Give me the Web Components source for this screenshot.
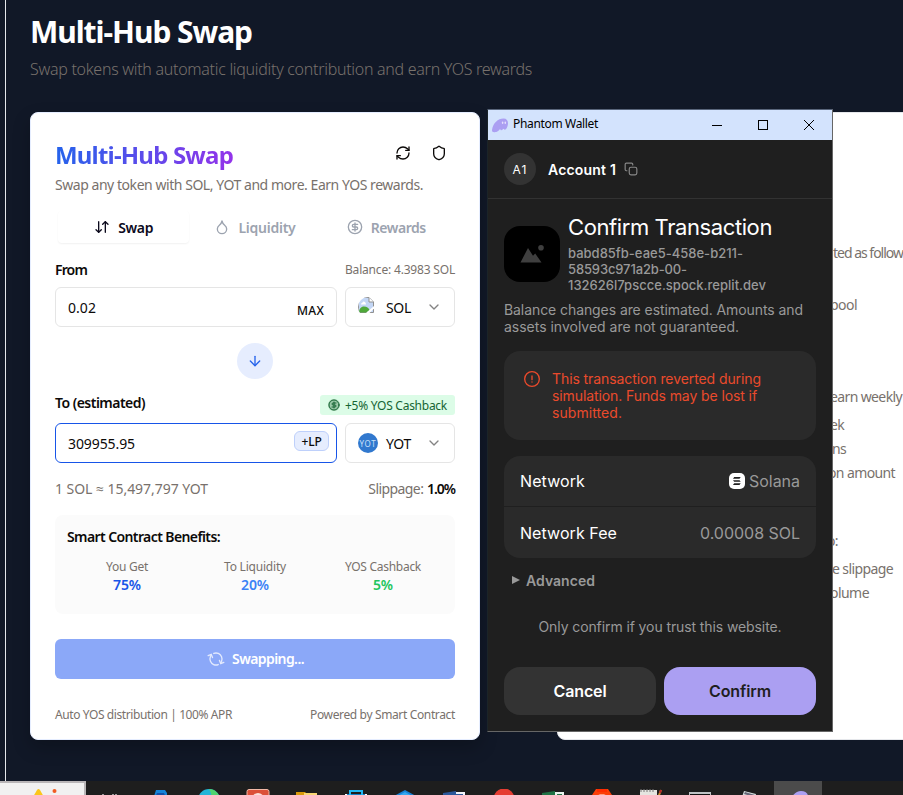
<!DOCTYPE html>
<html lang="en">
<head>
<meta charset="utf-8">
<title>Multi-Hub Swap</title>
<style>
html,body{margin:0;height:100%;overflow:hidden;background:#111827}
body{font-family:"Noto Sans","Open Sans",sans-serif}
</style>
</head>
<body>
<swap-desktop></swap-desktop>
<script>
function define(name, html, setup) {
  customElements.define(name, class extends HTMLElement {
    constructor() {
      super();
      this.attachShadow({ mode: 'open' });
    }
    connectedCallback() {
      if (this.shadowRoot.childNodes.length) return;
      const t = document.createElement('template');
      t.innerHTML = html;
      this.shadowRoot.append(t.content.cloneNode(true));
      if (setup) setup(this);
    }
  });
}

const stroke = (body) => `<svg viewBox="0 0 24 24" fill="none" stroke="currentColor" stroke-width="2" stroke-linecap="round" stroke-linejoin="round">${body}</svg>`;
const ICONS = {
  refresh: stroke('<path d="M3 12a9 9 0 0 1 9-9 9.75 9.75 0 0 1 6.74 2.74L21 8"/><path d="M21 3v5h-5"/><path d="M21 12a9 9 0 0 1-9 9 9.75 9.75 0 0 1-6.74-2.74L3 16"/><path d="M8 16H3v5"/>'),
  shield: stroke('<path d="M20 13c0 5-3.5 7.5-7.66 8.95a1 1 0 0 1-.67-.01C7.5 20.5 4 18 4 13V6a1 1 0 0 1 1-1c2 0 4.5-1.2 6.24-2.72a1.17 1.17 0 0 1 1.52 0C14.51 3.81 17 5 19 5a1 1 0 0 1 1 1z"/>'),
  swap: stroke('<path d="m3 16 4 4 4-4"/><path d="M7 20V4"/><path d="m21 8-4-4-4 4"/><path d="M17 4v16"/>'),
  droplet: stroke('<path d="M12 22a7 7 0 0 0 7-7c0-2-1-3.9-3-5.5s-3.5-4-4-6.500c-.5 2.500-2 4.900-4 6.500C6 11.100 5 13 5 15a7 7 0 0 0 7 7z"/>'),
  dollar: stroke('<circle cx="12" cy="12" r="10"/><path d="M16 8h-6a2 2 0 1 0 0 4h4a2 2 0 1 1 0 4H8"/><path d="M12 18V6"/>'),
  down: stroke('<path d="M12 5v14"/><path d="m19 12-7 7-7-7"/>'),
  chevron: stroke('<path d="m6 9 6 6 6-6"/>'),
  copy: stroke('<rect x="9" y="9" width="13" height="13" rx="3"/><path d="M5 15H4a2 2 0 0 1-2-2V4a2 2 0 0 1 2-2h9a2 2 0 0 1 2 2v1"/>'),
  alert: stroke('<circle cx="12" cy="12" r="11"/><path d="M12 7.500v5.500"/><path d="M12 16.500v.1"/>'),
  minus: '<svg viewBox="0 0 10 10"><path d="M0 5.500h10" stroke="#000"/></svg>',
  square: '<svg viewBox="0 0 10 10"><rect x=".5" y=".5" width="9" height="9" fill="none" stroke="#000"/></svg>',
  close: '<svg viewBox="0 0 10 10"><path d="M0 0 10 10M10 0 0 10" stroke="#000"/></svg>',
  ghost: '<svg viewBox="0 0 16 15"><path fill="#ab9ff2" d="M0 12C1 5 6 .5 11.500.5c3 0 4.700 2 4.500 5-.2 3-1.600 6.200-3.200 6.200-.8 0-.8-1-1.200-1-.5 0-1.300 1.600-2.300 1.600-.8 0-.6-1.100-1.200-1.100-.8 0-2 2.800-4.600 2.800C1.500 14.500-.2 14 0 12z"/><ellipse cx="10.600" cy="4.800" rx=".8" ry="1.200" fill="#e4defd"/><ellipse cx="13.300" cy="4.800" rx=".8" ry="1.200" fill="#e4defd"/></svg>',
  picture: '<svg viewBox="0 0 24 20"><path fill="#3f3f3f" d="M.5 18.500 8 4l5 7.800 2.200-2.300 6.300 9z"/><circle cx="21" cy="3.800" r="2.800" fill="#3f3f3f"/></svg>',
  solana: '<svg viewBox="0 0 16 16"><rect width="16" height="16" rx="5" fill="#fff"/><path fill="#222" d="M5.200 4h6.500l-1.200 1.700H4zM4 7.200h6.500l1.200 1.600H5.200zM5.200 10.300h6.500L10.500 12H4z"/></svg>',
  broken: '<svg viewBox="0 0 16 16"><path d="M.5.500h10.500l4.500 4.500v10.500H.5z" fill="#c3d6f5" stroke="#909090"/><path d="M11 .5v4.500h4.500" fill="#fff" stroke="#909090"/><path d="M1 15.500c0-3.500 2-6 5-6s4.500 1.500 5.500 3.500L8.500 15.500z" fill="#4fa83a"/><path d="M3 7.500c0-1.500 1.500-1.500 2-2.500s3 0 3 2.500z" fill="#fff"/><path d="m8 16 8-7v2.500l-4.500 4.500z" fill="#fff"/></svg>'
};

define('ui-icon', `<style>:host{display:block;flex:none;width:16px;height:16px}svg{display:block;width:100%;height:100%;overflow:visible}</style>`,
  el => el.shadowRoot.append(document.createRange().createContextualFragment(ICONS[el.getAttribute('name')])));

/* Taskbar: each button shows the upper part of its application icon. */
const APPS = [
  '<path d="M4 7v7M8 9h2M14 5v9M17 5v9M4 5v1" stroke="#eee" stroke-width="1.200"/>',
  '<path d="M4 14 8 1h9l2 3v10z" fill="#1683d8"/><path d="M5 14 9 4h7l2 5-5 1-2 4z" fill="#1450a8"/>',
  '<circle cx="12" cy="11" r="11" fill="#22b5d7"/><path d="M12 0a11 11 0 0 1 11 11v5h-9c0-7 2-9-2-16z" fill="#50d46f"/>',
  '<rect x="1" y=".5" width="22" height="20" rx="2" fill="#dc5039" stroke="#f3b9a6"/><circle cx="12" cy="10" r="6" fill="#fbe1db"/><circle cx="12" cy="10" r="3" fill="#d04a35"/>',
  '<path d="M1 3h9l2 2h10v9H1z" fill="#d99a0b"/><path d="M9 4h13v10H9z" fill="#f8d775"/>',
  '<path d="M1 5h22v9H1z" fill="#fff"/><path d="M3 5h18v9H3z" fill="#157fc9"/><path d="M6 7V2h12v5" fill="none" stroke="#22b8f3" stroke-width="2"/>',
  '<path d="m12 1 11 6v7H1V7z" fill="#1683d8"/><path d="m3 8 9-5 9 5-9 4z" fill="#37a9ef"/>',
  '<path d="m1 4 13-2v12H1z" fill="#2b579a"/><path d="M14 3h9v11h-9z" fill="#f2f5fb"/><path d="M14 5h7v2h-7z" fill="#2b579a"/>',
  '<circle cx="12" cy="10" r="10.500" fill="#e53d32"/>',
  '<path d="m1 4 13-2v12H1z" fill="#207245"/><path d="M14 3h9v11h-9z" fill="#e8f4ed"/><path d="M16 5h5v3h-5z" fill="#207245"/>',
  '<path d="M2 6 6 0h12l4 6v8H2z" fill="#fb3f08"/><path d="M6 7c3-2 9-2 12 0v8H6z" fill="#fff"/><path d="M7 0h10v3H7z" fill="#ff2c00"/>',
  '<path d="M1 1h17v13H1z" fill="#e5e5e0"/><path d="M2 0v3M5 0v3M8 0v3M11 0v3M14 0v3" stroke="#777"/><path d="m22 1-5 13" stroke="#c89136" stroke-width="2"/><path d="m22 1-1 3" stroke="#b92929" stroke-width="2"/>',
  '<path d="M1 3h22v11H1z" fill="#bfc3c5"/><path d="M2 5h20v8H2z" fill="#111"/>',
  '<path d="m7 2 12 3-2 9H3z" fill="#d7e0df"/><path d="m8 3 10 3-1 2L7 5z" fill="#667"/><path d="m4 8 9 2-1 4H3z" fill="#4c9e84"/>',
  '<path d="M3 14C5 7 10 2 15 2s8 3 7 8l-1 4z" fill="#ab9ff2"/>'
];
define('task-bar', `<style>
:host{display:flex;height:14px;background:#1e1e1e;overflow:hidden}
.widget{box-sizing:border-box;width:86px;height:14px;background:#f1f1f1;border:solid #b9b6b8;border-width:2px 2px 0 0;padding-left:32px;flex:none}
.app{flex:none;width:49.140px;height:14px;display:flex;justify-content:center;padding-top:8px;box-sizing:border-box}
.app:last-child{background:#4b4b4b;width:48px}
svg{display:block;flex:none}
</style><div class="widget"><svg width="32" height="12" viewBox="0 0 32 12"><path d="M1 14 5 7q1.500-2 3 0l4 7z" fill="#fbc61b"/><circle cx="22.500" cy="8" r="2" fill="#f15b22"/></svg></div>`,
  el => {
    for (const body of APPS) {
      const d = document.createElement('div');
      d.className = 'app';
      d.innerHTML = `<svg width="24" height="14" viewBox="0 0 24 14">${body}</svg>`;
      el.shadowRoot.append(d);
    }
  });

define('tab-item', `<style>
:host{display:flex;box-sizing:border-box;height:32px;align-items:center;justify-content:center;gap:8px;color:#9ca3af;font-size:14px;font-weight:600;border-radius:4px}
:host([active]){color:#0c0a1d;background:#fff;box-shadow:0 1px 2px rgba(0,0,0,.06)}
</style><slot></slot>`);

define('token-select', `<style>
:host{display:flex;box-sizing:border-box;width:110px;height:40px;align-items:center;border:1px solid #e5e5e5;border-radius:6px;padding:0 12px;font-size:14px;color:#0c0a09}
.logo{width:20px;height:20px;border-radius:50%;display:flex;align-items:center;justify-content:center;overflow:hidden;margin-right:8px;flex:none}
.name{flex:1}
ui-icon{opacity:.5}
</style><div class="logo"><slot name="logo"></slot></div><div class="name"><slot></slot></div><ui-icon name="chevron"></ui-icon>`);

define('amount-field', `<style>
:host{display:flex;box-sizing:border-box;width:282px;height:40px;align-items:center;justify-content:space-between;border:1px solid #e5e5e5;border-radius:6px;padding:0 8px 0 12px;font-size:14px;color:#0c0a09}
:host([focused]){border-color:#1755e8}
</style><slot></slot><slot name="action"></slot>`);

define('benefit-cell', `<style>
:host{display:flex;flex-direction:column;align-items:center;font-size:12px;line-height:18px;color:#78716c}
::slotted([slot=value]){font-size:14px;font-weight:600;line-height:18px}
</style><slot></slot><slot name="value"></slot>`);

define('swap-card', `<style>
:host{display:flex;flex-direction:column;flex:none;box-sizing:border-box;width:450px;height:628px;padding:24px;background:#fff;border:1px solid #e5edff;border-radius:8px;color:#0c0a09;font-size:14px;box-shadow:0 8px 18px rgba(0,0,0,.22)}
.row{display:flex;align-items:center;justify-content:space-between;flex:none}
.head{height:36px}
.title{font-size:24px;font-weight:700;line-height:36px;padding-bottom:1px;color:transparent;background:linear-gradient(90deg,#2563eb,#9333ea);-webkit-background-clip:text;background-clip:text}
.tools{display:flex;gap:20px;padding-right:8px;padding-bottom:4px}
.sub{height:20px;line-height:20px;color:#78716c;margin-top:2px}
.tabs{display:grid;grid-template-columns:repeat(3,1fr);padding:0 3px;margin-top:16px}
.from{height:20px;margin-top:16px}
.from>*{padding-top:1px}
.small{font-size:12px;color:#78716c}
b{font-weight:600}
.fields{margin-top:8px}
.max{font-weight:500;padding:6px 4px 0 0}
.circle{width:36px;height:36px;border-radius:50%;background:#e6edfe;color:#2563eb;display:flex;align-items:center;justify-content:center;margin:16px auto 0;flex:none}
.to{height:20px;margin-top:16px}
.to b{padding-bottom:6px}
.badge{display:flex;align-items:center;gap:5px;height:20px;width:135px;box-sizing:border-box;padding-left:8px;background:#dcfce7;color:#166534;font-size:12px;border-radius:3px}
.badge ui-icon{width:12px;height:12px;border-radius:50%;background:#9ccaa9}
.lp{box-sizing:border-box;display:flex;align-items:center;justify-content:center;width:35px;height:20px;border:1px solid #bed0fb;background:#e6edfe;border-radius:6px;font-size:12px;font-weight:500;margin:0 -1px 4px 0}
.yot{display:flex;align-items:center;justify-content:center;width:20px;height:20px;background:#3178ce;color:#c9e0fa;font-size:8px}
.rate{height:20px;margin-top:15px;color:#78716c}
.rate b{color:#0c0a09}
.box{box-sizing:border-box;height:99px;margin-top:17px;padding:12px;background:#fbfbfb;border-radius:8px;flex:none}
.box h4{margin:0;font-size:14px;font-weight:600;line-height:20px}
.grid{display:grid;grid-template-columns:1fr 1fr 1fr;gap:8px;margin-top:11px}
.button{display:flex;align-items:center;justify-content:center;gap:8px;height:40px;margin-top:25px;border-radius:6px;background:#8ba8f8;color:#fff;font-weight:600;flex:none;padding:0 0 1px 2px;box-sizing:border-box}
.button ui-icon{transform:rotate(68deg);opacity:.75}
.foot{height:20px;margin-top:25px}
</style>
<div class="row head"><div class="title"><fit-text w="178">Multi-Hub Swap</fit-text></div><div class="tools"><ui-icon name="refresh"></ui-icon><ui-icon name="shield"></ui-icon></div></div>
<div class="sub"><fit-text w="368">Swap any token with SOL, YOT and more. Earn YOS rewards.</fit-text></div>
<div class="tabs">
<tab-item active><ui-icon name="swap"></ui-icon><fit-text w="35">Swap</fit-text></tab-item>
<tab-item><ui-icon name="droplet"></ui-icon><fit-text w="57">Liquidity</fit-text></tab-item>
<tab-item><ui-icon name="dollar"></ui-icon><fit-text w="55">Rewards</fit-text></tab-item></div>
<div class="row from"><b><fit-text w="32">From</fit-text></b><span class="small"><fit-text w="110">Balance: 4.3983 SOL</fit-text></span></div>
<div class="row fields"><amount-field><fit-text w="28">0.02</fit-text><fit-text slot="action" class="max" w="31" style="font-size:12px">MAX</fit-text></amount-field>
<token-select><ui-icon slot="logo" name="broken" style="margin:-4px 0 0 -4px"></ui-icon><fit-text w="25">SOL</fit-text></token-select></div>
<div class="circle"><ui-icon name="down"></ui-icon></div>
<div class="row to"><b><fit-text w="90">To (estimated)</fit-text></b><div class="badge"><ui-icon name="dollar"></ui-icon><fit-text w="102">+5% YOS Cashback</fit-text></div></div>
<div class="row fields"><amount-field focused><fit-text w="67">309955.95</fit-text><span slot="action" class="lp"><fit-text w="20">+LP</fit-text></span></amount-field>
<token-select><span slot="logo" class="yot"><fit-text w="17">YOT</fit-text></span><fit-text w="25">YOT</fit-text></token-select></div>
<div class="row rate"><fit-text w="153">1 SOL ≈ 15,497,797 YOT</fit-text><span><fit-text w="55">Slippage:</fit-text>&nbsp;<b><fit-text w="28">1.0%</fit-text></b></span></div>
<div class="box"><h4><fit-text w="153">Smart Contract Benefits:</fit-text></h4><div class="grid">
<benefit-cell><fit-text w="42">You Get</fit-text><fit-text slot="value" w="28" style="color:#1755e8">75%</fit-text></benefit-cell>
<benefit-cell><fit-text w="62">To Liquidity</fit-text><fit-text slot="value" w="28" style="color:#3b82f6">20%</fit-text></benefit-cell>
<benefit-cell><fit-text w="76">YOS Cashback</fit-text><fit-text slot="value" w="20" style="color:#22c55e">5%</fit-text></benefit-cell></div></div>
<div class="button"><ui-icon name="refresh"></ui-icon><fit-text w="72">Swapping...</fit-text></div>
<div class="row foot small"><fit-text w="177">Auto YOS distribution | 100% APR</fit-text><fit-text w="145">Powered by Smart Contract</fit-text></div>`);

define('info-card', `<style>
:host{display:flex;flex-direction:column;box-sizing:border-box;width:450px;height:628px;flex:none;padding:130px 0 0 272px;background:#fff;border:1px solid #e5e7eb;border-radius:8px;color:#78716c;font-size:14px;line-height:20px}
.gap{margin-top:32px}.big{margin-top:72px}.li{margin-top:8px}.next{margin-top:4px}.sec{margin-top:48px}
div{height:20px}
</style>
<div style="margin-left:3px"><fit-text w="70">ted as follow</fit-text></div>
<div class="gap"><fit-text w="27">pool</fit-text></div>
<div class="big"><fit-text w="72">earn weekly</fit-text></div>
<div class="li"><fit-text w="14">ek</fit-text></div>
<div class="next" style="margin-left:2px"><fit-text w="14">ns</fit-text></div>
<div class="next" style="margin-left:-2px"><fit-text w="67">on amount</fit-text></div>
<div class="sec" style="margin-left:-3px"><fit-text w="11">o:</fit-text></div>
<div class="li" style="margin-left:2px"><fit-text w="61">e slippage</fit-text></div>
<div class="next"><fit-text w="39">olume</fit-text></div>`);

define('detail-row', `<style>
:host{display:flex;box-sizing:border-box;height:50px;align-items:center;justify-content:space-between;padding:0 16px;background:#2a2a2a;color:#fff;font-size:16px}
::slotted([slot=value]){display:flex;align-items:center;gap:4px;color:#999}
</style><slot></slot><slot name="value"></slot>`);

define('wallet-window', `<style>
:host{display:flex;flex-direction:column;box-sizing:border-box;width:346px;height:623px;border:1px solid #666;border-left-color:#1b2428;border-top-color:#59657b;background:#1f1f1f;color:#fff;font-family:Inter,"Liberation Sans",sans-serif;font-size:14px}
.bar{display:flex;align-items:center;height:30px;flex:none;background:#d3e3fd;color:#000;padding:0 18px 0 4px;font-family:"Noto Sans",sans-serif;font-size:12px}
.bar .name{flex:1;margin-left:5px;padding-bottom:3px}
.controls{display:flex;gap:36px}
.controls ui-icon{width:10px;height:10px}
.acct{display:flex;align-items:center;box-sizing:border-box;height:59px;flex:none;border-bottom:1px solid #323232;padding:0 16px}
.avatar{display:flex;align-items:center;justify-content:center;width:32px;height:32px;border-radius:50%;background:#333;font-size:12px;margin-right:12px}
.acct b{font-weight:600}
.body{display:flex;flex-direction:column;padding:16px;flex:1}
.site{display:flex;gap:8px;height:81px;flex:none}
.thumb{display:flex;align-items:center;justify-content:center;width:56px;height:56px;border-radius:16px;background:#000;margin-top:11px;flex:none}
.thumb ui-icon{width:24px;height:20px}
h1{margin:0;font-size:22px;font-weight:400;line-height:24px}
.host{font-size:13px;font-weight:500;line-height:16px;color:#999;margin-top:6px}
.line{display:block}
.note{color:#999;line-height:17px;margin-top:5px}
.warn{box-sizing:border-box;display:flex;gap:12px;height:89px;padding:19px 20px;margin-top:16px;border-radius:16px;background:#2a2a2a;color:#ea4a2c;line-height:17px;flex:none}
.warn ui-icon{margin-top:1px}
.rows{display:grid;gap:1px;margin-top:16px;border-radius:16px;overflow:hidden;flex:none}
.rows detail-row+detail-row{height:51px}
.adv{display:flex;align-items:center;gap:6px;height:20px;margin-top:12px;padding-left:8px;color:#999;font-weight:600}
.adv i{border:solid transparent;border-width:4px 0 4px 8px;border-left-color:#999}
.trust{height:20px;line-height:20px;margin-top:27px;text-align:center;color:#999}
.buttons{display:grid;grid-template-columns:1fr 1fr;gap:8px;margin-top:30px}
.buttons div{display:flex;height:48px;align-items:center;justify-content:center;border-radius:16px;background:#333;font-size:16px;font-weight:600}
.buttons div+div{background:#ab9ff2;color:#1f1f1f}
</style>
<div class="bar"><ui-icon name="ghost" style="height:15px"></ui-icon><span class="name"><fit-text w="85">Phantom Wallet</fit-text></span><div class="controls"><ui-icon name="minus"></ui-icon><ui-icon name="square"></ui-icon><ui-icon name="close"></ui-icon></div></div>
<div class="acct"><div class="avatar"><fit-text w="15">A1</fit-text></div><b><fit-text w="68">Account 1</fit-text></b><ui-icon name="copy" style="width:14px;height:14px;color:#888;margin-left:8px"></ui-icon></div>
<div class="body">
<div class="site"><div class="thumb"><ui-icon name="picture"></ui-icon></div><div><h1><fit-text w="204">Confirm Transaction</fit-text></h1>
<div class="host"><span class="line"><fit-text w="175">babd85fb-eae5-458e-b211-</fit-text></span><span class="line"><fit-text w="119">58593c971a2b-00-</fit-text></span><span class="line"><fit-text w="198">132626l7pscce.spock.replit.dev</fit-text></span></div></div></div>
<div class="note"><span class="line"><fit-text w="299">Balance changes are estimated. Amounts and</fit-text></span><span class="line"><fit-text w="235">assets involved are not guaranteed.</fit-text></span></div>
<div class="warn"><ui-icon name="alert"></ui-icon><div><span class="line"><fit-text w="209">This transaction reverted during</fit-text></span><span class="line"><fit-text w="205">simulation. Funds may be lost if</fit-text></span><span class="line"><fit-text w="70">submitted.</fit-text></span></div></div>
<div class="rows"><detail-row><fit-text w="65">Network</fit-text><span slot="value"><ui-icon name="solana"></ui-icon><fit-text w="51">Solana</fit-text></span></detail-row>
<detail-row><fit-text w="97">Network Fee</fit-text><span slot="value"><fit-text w="100">0.00008 SOL</fit-text></span></detail-row></div>
<div class="adv"><i></i><fit-text w="69">Advanced</fit-text></div>
<div class="trust"><fit-text w="243">Only confirm if you trust this website.</fit-text></div>
<div class="buttons"><div><fit-text w="53">Cancel</fit-text></div><div><fit-text w="62">Confirm</fit-text></div></div>
</div>`);

define('swap-desktop', `<style>
:host{display:flex;flex-direction:column;width:903px;height:795px;overflow:hidden;position:relative;background:#111827}
.page{box-sizing:border-box;height:781px;margin-left:5px;border-left:1px solid #e5e7eb;padding:14px 0 0 24px;flex:none;overflow:hidden}
h2{margin:0;font-size:30px;font-weight:700;line-height:36px;color:#fff}
p{margin:8px 0 0;font-size:16px;line-height:22px;font-weight:300;color:#78716c}
.cards{display:flex;gap:77px;margin-top:32px}
wallet-window{position:absolute;left:487px;top:109px}
</style>
<div class="page"><h2><fit-text w="222">Multi-Hub Swap</fit-text></h2><p><fit-text w="502">Swap tokens with automatic liquidity contribution and earn YOS rewards</fit-text></p>
<div class="cards"><swap-card></swap-card><info-card></info-card></div></div>
<task-bar></task-bar><wallet-window></wallet-window>`);

/* Inline text that spreads its letters to fill the width given in "w". */
define('fit-text', `<style>:host{display:inline-block;white-space:nowrap}</style><slot></slot>`, el => {
  const cs = getComputedStyle(el);
  const pad = parseFloat(cs.paddingLeft) + parseFloat(cs.paddingRight);
  const natural = el.getBoundingClientRect().width - pad;
  const target = parseFloat(el.getAttribute('w')) - (el.classList.contains('max') ? 4 : 0);
  const n = el.textContent.length;
  el.style.letterSpacing = ((target - natural) / n).toFixed(3) + 'px';
});
</script>
</body>
</html>
